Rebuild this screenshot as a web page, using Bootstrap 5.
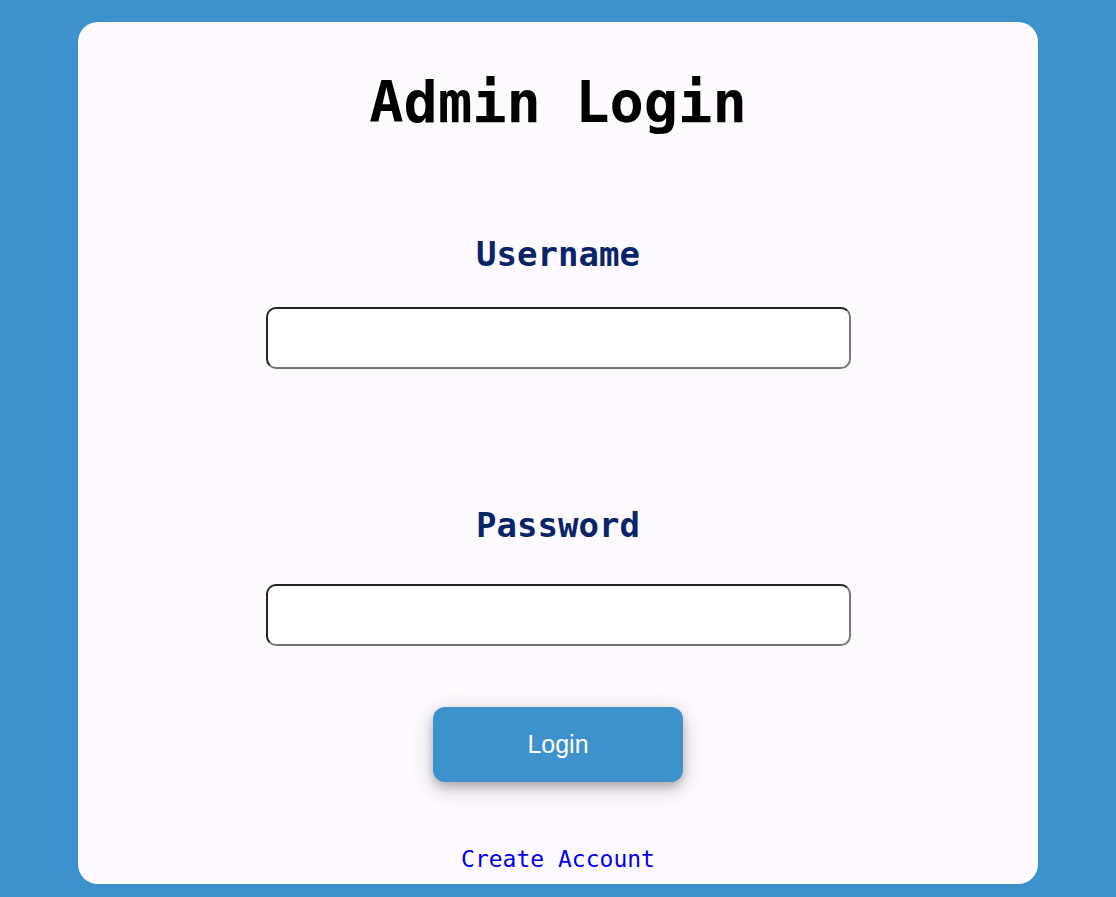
<!DOCTYPE html>
<html lang="en">
<head>
<meta charset="utf-8">
<meta name="viewport" content="width=device-width, initial-scale=1">
<title>Admin Login</title>
<link href="https://cdn.jsdelivr.net/npm/bootstrap@5.3.0/dist/css/bootstrap.min.css" rel="stylesheet">
<style>
body { background: #3d92cb; color: #000; font-family: Consolas, "DejaVu Sans Mono", monospace; }
.login-panel { width: 86%; max-width: 960px; margin-top: 22px; margin-bottom: 13px; padding: 44px 16px 10px; background: #fffaff; border-radius: 20px; }
.login-title { font-size: 57px; line-height: 72px; font-weight: 700; margin-bottom: 92px; }
.field-label { font-size: 34px; line-height: 48px; font-weight: 700; color: #082567; }
.field-input { width: 585px; max-width: 100%; height: 62px; padding: 8px 16px; font-size: 24px; background: #fff; border: 2px inset #767676; border-radius: 10px; }
.field-user { margin-top: 29px; margin-bottom: 132px; }
.field-pass { margin-top: 35px; margin-bottom: 61px; }
.login-btn { width: 250px; height: 75px; color: #fff; background: #3d92cb; border-radius: 12px; font: 25px "Liberation Sans", Arial, sans-serif; box-shadow: 0 5px 10px rgba(0,0,0,.2), 0 6px 25px rgba(0,0,0,.2); }
.login-btn:hover { color: #fff; background: #337fb2; }
.create-link { margin-top: 62px; font-size: 23px; line-height: 30px; color: #00e; }
</style>
</head>
<body>
<main class="login-panel mx-auto">
<form class="d-flex flex-column align-items-center text-center">
<h1 class="login-title">Admin Login</h1>
<label class="field-label" for="username">Username</label>
<input class="field-input field-user" id="username" type="text" autocomplete="username">
<label class="field-label" for="password">Password</label>
<input class="field-input field-pass" id="password" type="password" autocomplete="current-password">
<button class="btn login-btn border-0" type="submit">Login</button>
<a class="create-link text-decoration-none" href="#">Create Account</a>
</form>
</main>
<script src="https://cdn.jsdelivr.net/npm/bootstrap@5.3.0/dist/js/bootstrap.bundle.min.js"></script>
</body>
</html>
